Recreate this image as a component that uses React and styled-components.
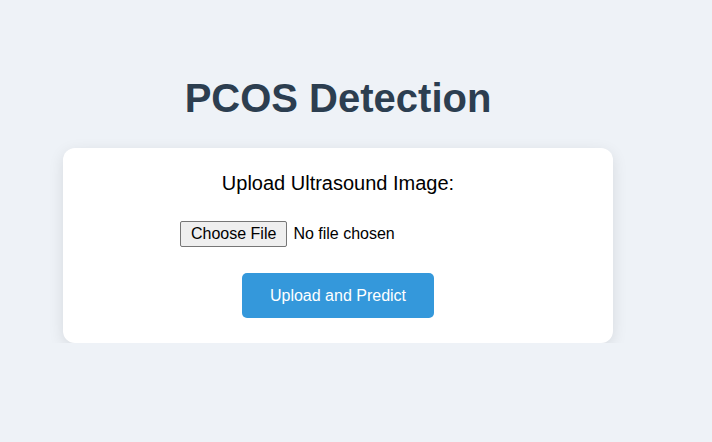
import React from 'react';
import styled, { createGlobalStyle } from 'styled-components';

const GlobalStyle = createGlobalStyle`
  html, body {
    margin: 0;
    padding: 0;
    background: #eef2f7;
    font-family: "Liberation Sans", Arial, sans-serif;
  }
`;

const Page = styled.div`
  width: 550px;
  margin-left: 63px;
  padding-top: 75px;
  display: flex;
  flex-direction: column;
  align-items: center;
`;

const Title = styled.h1`
  margin: 0 0 27px;
  font-size: 40px;
  line-height: 46px;
  font-weight: 700;
  color: #2c3e50;
  text-align: center;
`;

const Card = styled.form`
  box-sizing: border-box;
  width: 100%;
  background: #ffffff;
  border-radius: 12px;
  box-shadow: 0 4px 15px rgba(0, 0, 0, 0.1);
  padding: 24px 20px 25px;
  display: flex;
  flex-direction: column;
  align-items: center;
`;

const Label = styled.label`
  font-size: 20px;
  line-height: 23px;
  color: #000;
  margin-bottom: 26px;
`;

const FileInput = styled.input`
  font-family: "Liberation Sans", Arial, sans-serif;
  font-size: 16px;
  line-height: 18px;
  color: #000;
  width: 316px;
  margin: 0 0 26px;

  &::file-selector-button {
    font-family: inherit;
    font-size: 16px;
    line-height: 18px;
    background: #efefef;
    color: #000;
    border: 1px solid #767676;
    border-radius: 2px;
    padding: 3px 10px;
    margin-right: 6px;
  }
`;

const SubmitButton = styled.button`
  font-family: "Liberation Sans", Arial, sans-serif;
  font-size: 16px;
  line-height: 19px;
  color: #ffffff;
  background: #3498db;
  border: none;
  border-radius: 5px;
  padding: 13px 28px;
  cursor: pointer;
`;

export default function App() {
  return (
    <>
      <GlobalStyle />
      <Page>
        <Title>PCOS Detection</Title>
        <Card onSubmit={(e) => e.preventDefault()}>
          <Label htmlFor="image">Upload Ultrasound Image:</Label>
          <FileInput type="file" id="image" accept="image/*" />
          <SubmitButton type="submit">Upload and Predict</SubmitButton>
        </Card>
      </Page>
    </>
  );
}
